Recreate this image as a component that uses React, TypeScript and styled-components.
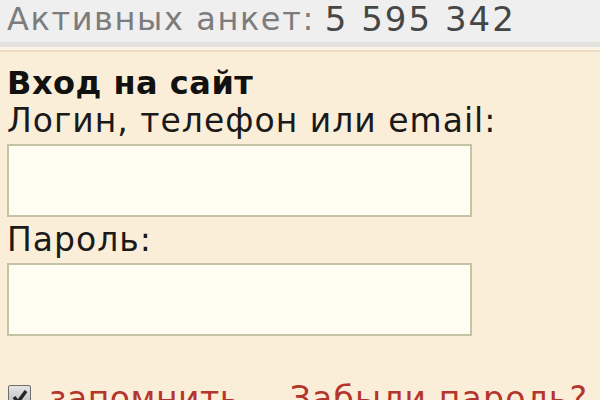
import React from 'react';
import styled, { createGlobalStyle } from 'styled-components';

const GlobalStyle = createGlobalStyle`
  html, body {
    margin: 0;
    padding: 0;
    background: #fbeed8;
    overflow: hidden;
  }
  * {
    box-sizing: border-box;
  }
`;

const App: React.FC = () => {
  return (
    <>
      <GlobalStyle />
      <Page>
        <StatsBar>
          <StatsLabel>Активных анкет:</StatsLabel>
          <StatsCount>5 595 342</StatsCount>
        </StatsBar>
        <LoginPanel>
          <Title>Вход на сайт</Title>
          <FieldLabel>Логин, телефон или email:</FieldLabel>
          <TextField type="text" />
          <FieldLabel>Пароль:</FieldLabel>
          <TextField type="password" />
          <OptionsRow>
            <Remember>
              <CheckBox>
                <svg width="18" height="16" viewBox="0 0 18 16">
                  <path d="M3 8 L7 13 L15 2" fill="none" stroke="#262626" strokeWidth="3.5" />
                </svg>
              </CheckBox>
              <RedLink>запомнить</RedLink>
            </Remember>
            <RedLink $spacing={1.2}>Забыли пароль?</RedLink>
          </OptionsRow>
        </LoginPanel>
      </Page>
    </>
  );
};

export default App;

// Styles |
//        v

const Page = styled.div`
  width: 600px;
  height: 400px;
  display: flex;
  flex-direction: column;
  font-family: "DejaVu Sans", Verdana, sans-serif;
`;

const StatsBar = styled.div`
  height: 47px;
  display: flex;
  align-items: center;
  gap: 10px;
  padding: 0 0 4px 7px;
  background: #efefef;
  border-bottom: 5px solid #e4e2df;
  white-space: nowrap;
`;

const StatsLabel = styled.span`
  font-size: 32px;
  color: #7c7c7c;
  letter-spacing: 1.6px;
`;

const StatsCount = styled.span`
  font-size: 34px;
  color: #464646;
  letter-spacing: 2px;
`;

const LoginPanel = styled.div`
  flex: 1;
  display: flex;
  flex-direction: column;
  align-items: flex-start;
  padding: 18px 0 0 7px;
  background: #fbeed8;
  box-shadow: inset 0 3px 0 #fdf5ea, inset 0 5px 0 #ecdcc2;
`;

const Title = styled.div`
  font-size: 32px;
  line-height: 36px;
  font-weight: bold;
  color: #111;
  letter-spacing: 0.5px;
`;

const FieldLabel = styled.div`
  font-size: 33px;
  line-height: 40px;
  color: #1a1a1a;
  letter-spacing: 1px;
  white-space: nowrap;
`;

const TextField = styled.input`
  width: 465px;
  height: 73px;
  margin: 3px 0;
  background: #fffdf2;
  border: 2px solid #c6c2a6;
  outline: none;
  padding: 0 8px;
  font-size: 28px;
  font-family: inherit;
`;

const OptionsRow = styled.div`
  display: flex;
  align-items: flex-start;
  gap: 50px;
  margin-top: 40px;
  white-space: nowrap;
`;

const Remember = styled.div`
  display: flex;
  align-items: flex-start;
  gap: 18px;
  padding-left: 1px;
`;

const CheckBox = styled.span`
  width: 23px;
  height: 23px;
  margin-top: 6px;
  display: flex;
  align-items: center;
  justify-content: center;
  border: 1px solid #6e6e6e;
  border-radius: 2px;
  background: linear-gradient(#e4e4e4, #b8b8b8);
`;

const RedLink = styled.span<{ $spacing?: number }>`
  font-size: 33px;
  line-height: 40px;
  color: #b3352c;
  letter-spacing: ${({ $spacing }) => $spacing ?? 0.5}px;
`;
